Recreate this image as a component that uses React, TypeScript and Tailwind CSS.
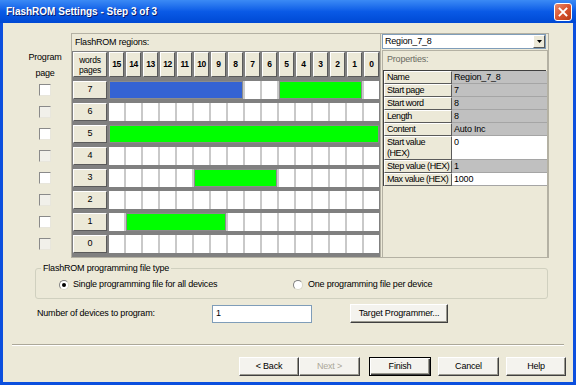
import React from 'react';

const font = { fontFamily: '"Liberation Sans", Arial, sans-serif' };

const words = [15, 14, 13, 12, 11, 10, 9, 8, 7, 6, 5, 4, 3, 2, 1, 0];

type Bar = { from: number; len: number; color: 'blue' | 'green' };

// from = index counted from the left (0 = word 15)
const pages: { page: number; enabled: boolean; bars: Bar[] }[] = [
  { page: 7, enabled: true, bars: [{ from: 0, len: 8, color: 'blue' }, { from: 10, len: 5, color: 'green' }] },
  { page: 6, enabled: false, bars: [] },
  { page: 5, enabled: true, bars: [{ from: 0, len: 16, color: 'green' }] },
  { page: 4, enabled: false, bars: [] },
  { page: 3, enabled: true, bars: [{ from: 5, len: 5, color: 'green' }] },
  { page: 2, enabled: false, bars: [] },
  { page: 1, enabled: true, bars: [{ from: 1, len: 6, color: 'green' }] },
  { page: 0, enabled: false, bars: [] },
];

const span: Record<number, string> = {
  5: 'col-span-5',
  6: 'col-span-6',
  8: 'col-span-8',
  16: 'col-span-16',
};

const props: { label: React.ReactNode; value: string; edit: boolean; h: string }[] = [
  { label: 'Name', value: 'Region_7_8', edit: false, h: 'h-[13px]' },
  { label: 'Start page', value: '7', edit: false, h: 'h-[13px]' },
  { label: 'Start word', value: '8', edit: false, h: 'h-[13px]' },
  { label: 'Length', value: '8', edit: false, h: 'h-[13px]' },
  { label: 'Content', value: 'Auto Inc', edit: false, h: 'h-[13px]' },
  { label: <>Start value<br />(HEX)</>, value: '0', edit: true, h: 'h-[24px]' },
  { label: 'Step value (HEX)', value: '1', edit: false, h: 'h-[13px]' },
  { label: 'Max value (HEX)', value: '1000', edit: true, h: 'h-[13px]' },
];

const bevel =
  'bg-[#ece9d8] border border-t-white border-l-white border-r-[#5a5a5a] border-b-[#5a5a5a]';

const btnBase = 'h-[19px] bg-[#f4f3ee] flex items-center justify-center text-[9px]';
const btn =
  `${btnBase} border border-t-white border-l-white border-r-[#404040] border-b-[#404040] shadow-[inset_-1px_-1px_0_#9a998f]`;

function Radio({ checked }: { checked?: boolean }) {
  return (
    <span className="w-[10px] h-[10px] rounded-full bg-white border border-t-[#808080] border-l-[#808080] border-r-[#d8d6c8] border-b-[#d8d6c8] flex items-center justify-center shrink-0">
      {checked && <span className="w-[4px] h-[4px] rounded-full bg-black" />}
    </span>
  );
}

function RegionRow({ page, bars }: { page: number; bars: Bar[] }) {
  const cells: React.ReactNode[] = [];
  let i = 0;
  while (i < 16) {
    const bar = bars.find((b) => b.from === i);
    if (bar) {
      cells.push(
        <div
          key={i}
          className={`${span[bar.len]} border border-[#8c8c8c] ${
            bar.color === 'blue' ? 'bg-[#3563d3]' : 'bg-[#00ff00]'
          }`}
        />
      );
      i += bar.len;
    } else {
      cells.push(<div key={i} className="bg-white" />);
      i += 1;
    }
  }
  return (
    <div className="flex h-[18px] gap-[2px]">
      <div className={`${bevel} w-[34px] flex items-center justify-center text-[9px]`}>{page}</div>
      <div className="w-[270px] bg-[#c9c9c9] grid grid-cols-[repeat(16,15px)] gap-x-[2px]">{cells}</div>
    </div>
  );
}

export default function App() {
  return (
    <div className="w-[576px] h-[385px] flex flex-col tracking-[-0.2px] text-black select-none" style={font}>
      {/* Title bar */}
      <div className="h-[23px] shrink-0 bg-gradient-to-b from-[#3b8af5] via-[#0a5ae6] to-[#0049d4] flex items-center">
        <span className="ml-[6px] text-[10px] font-bold text-white tracking-normal [text-shadow:1px_1px_0_#0a1c6b]">
          FlashROM Settings - Step 3 of 3
        </span>
        <div className="ml-auto mr-[4px] w-[18px] h-[18px] rounded-[3px] border border-white bg-gradient-to-br from-[#e9896b] via-[#d9542f] to-[#b73a14] flex items-center justify-center">
          <svg width="10" height="10" viewBox="0 0 10 10">
            <path d="M1.5 1.5 L8.5 8.5 M8.5 1.5 L1.5 8.5" stroke="white" strokeWidth="1.8" strokeLinecap="square" />
          </svg>
        </div>
      </div>

      {/* Client area */}
      <div className="flex-1 bg-[#ece9d8] border-x-[3px] border-b-[3px] border-[#0b4fde] flex flex-col text-[9px]">
        <div className="flex pt-[10px]">
          {/* Program page column */}
          <div className="w-[68px] shrink-0">
            <div className="ml-[22px] w-[40px] flex flex-col items-center">
              <div className="mt-[16px] leading-[16px] text-center">
                Program
                <br />
                page
              </div>
              <div className="mt-[3px] flex flex-col gap-[10px]">
                {pages.map((p) => (
                  <div
                    key={p.page}
                    className={`w-[12px] h-[12px] border border-t-[#8a8a8a] border-l-[#8a8a8a] border-r-[#e8e6dc] border-b-[#e8e6dc] ${
                      p.enabled ? 'bg-white' : 'bg-[#f1f0ea]'
                    }`}
                  />
                ))}
              </div>
            </div>
          </div>

          {/* Regions frame */}
          <div className="w-[478px] h-[225px] border border-[#b4b1a3] flex">
            <div className="w-[308px] flex flex-col">
              <div className="h-[17px] pl-[3px] flex items-center">FlashROM regions:</div>
              <div className="flex-1 bg-[#808080] pl-[1px] pt-[1px] flex flex-col gap-[4px]">
                <div className="flex h-[25px] gap-[2px]">
                  <div className={`${bevel} w-[34px] flex flex-col items-center justify-center leading-[10px] text-[8.5px]`}>
                    <span>words</span>
                    <span>pages</span>
                  </div>
                  <div className="w-[270px] grid grid-cols-[repeat(16,15px)] gap-x-[2px]">
                    {words.map((w) => (
                      <div key={w} className={`${bevel} flex items-center justify-center font-bold text-[8.5px] tracking-[-0.4px]`}>
                        {w}
                      </div>
                    ))}
                  </div>
                </div>
                {pages.map((p) => (
                  <RegionRow key={p.page} page={p.page} bars={p.bars} />
                ))}
              </div>
            </div>

            {/* Properties */}
            <div className="flex-1 pl-[1px] border-l border-[#b4b1a3] flex flex-col">
              <div className="w-[164px] h-[15px] bg-white border border-[#7f9db9] flex items-center">
                <span className="pl-[2px] flex-1">Region_7_8</span>
                <div className={`${bevel} w-[12px] h-full flex items-center justify-center`}>
                  <svg width="5" height="3" viewBox="0 0 5 3">
                    <path d="M0 0 H5 L2.5 3 Z" fill="black" />
                  </svg>
                </div>
              </div>
              <div className="mt-[1px] w-[166px] flex-1 border-t border-l border-r border-[#b4b1a3]">
                <div className="h-[17px] pl-[4px] flex items-center text-[#6a6a62]">Properties:</div>
                <div className="mt-[2px] w-[163px] border-t border-l border-[#404040] grid grid-cols-[68px_95px]">
                  {props.map((r, i) => (
                    <React.Fragment key={i}>
                      <div className={`${bevel} ${r.h} pl-[2px] leading-[11px] flex items-center whitespace-nowrap overflow-hidden tracking-[-0.45px]`}>
                        <span>{r.label}</span>
                      </div>
                      <div
                        className={`${r.h} px-[2px] leading-[11px] border-b border-[#a5a5a5] flex ${
                          r.edit ? 'bg-white items-start pt-[1px]' : 'bg-[#c0c0c0] items-center'
                        }`}
                      >
                        {r.value}
                      </div>
                    </React.Fragment>
                  ))}
                </div>
              </div>
            </div>
          </div>
        </div>

        {/* Programming file type */}
        <fieldset className="ml-[32px] mt-[4px] w-[513px] border border-[#d0d0bf] rounded-[3px]">
          <legend className="ml-[5px] px-[2px] leading-[12px]">FlashROM programming file type</legend>
          <div className="mt-[5px] mb-[7px] h-[12px] flex items-center">
            <div className="ml-[23px] w-[234px] flex items-center gap-[4px]">
              <Radio checked />
              <span>Single programming file for all devices</span>
            </div>
            <div className="flex items-center gap-[5px]">
              <Radio />
              <span>One programming file per device</span>
            </div>
          </div>
        </fieldset>

        {/* Number of devices */}
        <div className="mt-[5px] h-[19px] pl-[34px] flex items-center">
          <span className="w-[175px]">Number of devices to program:</span>
          <div className="w-[100px] h-[18px] bg-white border border-[#7f9db9] pl-[3px] flex items-center">1</div>
          <div className={`${btn} ml-[38px] w-[98px]`}>Target Programmer...</div>
        </div>

        {/* Separator */}
        <div className="mt-[21px] mx-[9px] border-t border-[#aca899] border-b border-b-white" />

        {/* Wizard buttons */}
        <div className="mt-[11px] flex justify-end pr-[7px]">
          <div className={`${btn} w-[60px]`}>&lt; Back</div>
          <div className={`${btn} w-[61px] text-[#aca899]`}>Next &gt;</div>
          <div className={`${btnBase} ml-[9px] w-[62px] border border-black shadow-[inset_1px_1px_0_#fff,inset_-1px_-1px_0_#404040,inset_-2px_-2px_0_#9a998f]`}>
            Finish
          </div>
          <div className={`${btn} ml-[7px] w-[61px]`}>Cancel</div>
          <div className={`${btn} ml-[7px] w-[60px]`}>Help</div>
        </div>
      </div>
    </div>
  );
}
